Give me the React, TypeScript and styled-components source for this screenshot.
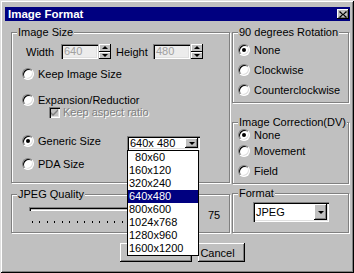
import React from "react";
import styled, { createGlobalStyle } from "styled-components";

const GlobalStyle = createGlobalStyle`
    html, body {
        margin: 0;
        padding: 0;
        background: #ffffff;
    }
    body {
        font-family: "Liberation Sans", Arial, sans-serif;
        font-size: 11px;
        color: #000;
    }
`;

const Window = styled.div`
    width: 354px;
    height: 273px;
    box-sizing: border-box;
    padding: 7px 4px 0 5px;
    background: #c0c0c0;
    box-shadow: inset 1px 1px #dfdfdf, inset -1px -1px #000,
        inset 2px 2px #fff, inset -2px -2px #808080;
`;

const TitleBar = styled.div`
    height: 14px;
    display: flex;
    align-items: center;
    justify-content: space-between;
    padding: 0 1px 0 3px;
    background: #000080;
    color: #fff;
    font-weight: bold;
    font-size: 11.5px;
`;

const CloseButton = styled.div`
    width: 12px;
    height: 10px;
    box-sizing: border-box;
    display: flex;
    align-items: center;
    justify-content: center;
    background: #c0c0c0;
    box-shadow: inset -1px -1px #000, inset 1px 1px #fff, inset -2px -2px #808080;
`;

const Columns = styled.div`
    display: grid;
    grid-template-columns: 219px 117px;
    column-gap: 2px;
    margin-left: 6px;
`;

const Column = styled.div`
    display: flex;
    flex-direction: column;
`;

const Group = styled.div<{ $h: number; $mt: number }>`
    position: relative;
    box-sizing: border-box;
    height: ${(p) => p.$h}px;
    margin-top: ${(p) => p.$mt}px;
    border: 1px solid #808080;
    box-shadow: inset 1px 1px #fff, 1px 1px #fff;
`;

const Legend = styled.span`
    position: absolute;
    top: -8px;
    left: 5px;
    padding: 0 1px;
    line-height: 14px;
    background: #c0c0c0;
    white-space: nowrap;
`;

const SizeRow = styled.div`
    display: flex;
    align-items: center;
    height: 15px;
    margin-top: 11px;
    padding-left: 14px;
`;

const FieldLabel = styled.span<{ $w: number }>`
    width: ${(p) => p.$w}px;
    flex: none;
`;

const Edit = styled.div`
    width: 37px;
    height: 15px;
    box-sizing: border-box;
    padding: 1px 0 0 3px;
    background: #ececec;
    color: #a0a0a0;
    box-shadow: inset 1px 1px #808080, inset 2px 2px #000, inset -1px -1px #fff,
        inset -2px -2px #dfdfdf;
`;

const Spinner = styled.div`
    width: 12px;
    height: 15px;
    display: flex;
    flex-direction: column;
    margin-left: 1px;
    margin-right: 5px;
`;

const SpinHalf = styled.div<{ $down?: boolean }>`
    flex: 1;
    display: flex;
    align-items: center;
    justify-content: center;
    background: #c0c0c0;
    box-shadow: inset -1px -1px #000, inset 1px 1px #fff;
    &::after {
        content: "";
        border-left: 3px solid transparent;
        border-right: 3px solid transparent;
        ${(p) => (p.$down ? "border-top: 3px solid #000;" : "border-bottom: 3px solid #000;")}
    }
`;

const OptionRow = styled.div<{ $mt: number; $pl: number }>`
    display: flex;
    align-items: center;
    height: 12px;
    margin-top: ${(p) => p.$mt}px;
    padding-left: ${(p) => p.$pl}px;
    white-space: nowrap;
`;

const RadioDot = styled.span<{ $on?: boolean }>`
    position: relative;
    flex: none;
    width: 12px;
    height: 12px;
    box-sizing: border-box;
    border-radius: 50%;
    background: #fff;
    border: 1px solid;
    border-color: #808080 #fff #fff #808080;
    box-shadow: inset 1px 1px #000, inset -1px -1px #dfdfdf;
    margin-right: 4px;
    &::after {
        content: "";
        display: ${(p) => (p.$on ? "block" : "none")};
        position: absolute;
        left: 3px;
        top: 3px;
        width: 4px;
        height: 4px;
        border-radius: 50%;
        background: #000;
    }
`;

const OptionText = styled.span<{ $w?: number }>`
    ${(p) => (p.$w ? `width: ${p.$w}px;` : "")}
`;

const CheckBox = styled.span`
    flex: none;
    width: 11px;
    height: 11px;
    box-sizing: border-box;
    display: flex;
    align-items: center;
    justify-content: center;
    margin-right: 3px;
    background: #c0c0c0;
    box-shadow: inset 1px 1px #808080, inset 2px 2px #000, inset -1px -1px #fff,
        inset -2px -2px #dfdfdf;
`;

const DisabledText = styled.span`
    color: #808080;
    text-shadow: 1px 1px #fff;
`;

const SelectWrap = styled.div`
    position: relative;
    margin-top: 4px;
`;

const Select = styled.div<{ $w: number; $h: number }>`
    width: ${(p) => p.$w}px;
    height: ${(p) => p.$h}px;
    box-sizing: border-box;
    display: flex;
    align-items: center;
    justify-content: space-between;
    padding: 2px 2px 2px 3px;
    background: #fff;
    box-shadow: inset 1px 1px #808080, inset 2px 2px #000, inset -1px -1px #fff,
        inset -2px -2px #dfdfdf;
`;

const DropButton = styled.div`
    width: 13px;
    align-self: stretch;
    display: flex;
    align-items: center;
    justify-content: center;
    background: #c0c0c0;
    box-shadow: inset -1px -1px #000, inset 1px 1px #fff, inset -2px -2px #808080;
    &::after {
        content: "";
        border-left: 3px solid transparent;
        border-right: 3px solid transparent;
        border-top: 3px solid #000;
    }
`;

const DropList = styled.div`
    position: absolute;
    left: 0;
    top: 100%;
    width: 72px;
    box-sizing: border-box;
    border: 1px solid #000;
    background: #fff;
    z-index: 2;
`;

const DropItem = styled.div<{ $sel?: boolean }>`
    height: 13px;
    line-height: 13px;
    padding-left: 1px;
    white-space: pre;
    background: ${(p) => (p.$sel ? "#000080" : "#fff")};
    color: ${(p) => (p.$sel ? "#fff" : "#000")};
`;

const SliderRow = styled.div`
    display: flex;
    align-items: flex-start;
    margin-top: 11px;
    padding-left: 17px;
`;

const SliderArea = styled.div`
    position: relative;
    width: 166px;
    height: 30px;
`;

const Track = styled.div`
    height: 4px;
    margin-top: 1px;
    box-shadow: inset 1px 1px #808080, inset 2px 2px #000, inset -1px -1px #fff;
`;

const Ticks = styled.div`
    display: flex;
    justify-content: space-between;
    margin: 10px 5px 0 3px;
`;

const Tick = styled.span`
    width: 1px;
    height: 2px;
    background: #000;
`;

const Thumb = styled.svg`
    position: absolute;
    left: 151px;
    top: -5px;
`;

const Value = styled.span`
    margin: 3px 0 0 13px;
`;

const FormatRow = styled.div`
    margin: 8px 0 0 20px;
`;

const ButtonRow = styled.div`
    display: flex;
    gap: 6px;
    margin-top: 10px;
    padding-left: 115px;
`;

const Button = styled.div<{ $w: number; $pb?: number }>`
    width: ${(p) => p.$w}px;
    height: 19px;
    box-sizing: border-box;
    display: flex;
    align-items: center;
    justify-content: center;
    padding: 0 8px ${(p) => p.$pb ?? 0}px 0;
    background: #c0c0c0;
    box-shadow: inset -1px -1px #000, inset 1px 1px #fff, inset -2px -2px #808080;
`;

const sizes = [
    "\u200780x60",
    "160x120",
    "320x240",
    "640x480",
    "800x600",
    "1024x768",
    "1280x960",
    "1600x1200",
];

const App: React.FC = () => {
    return (
        <Window>
            <GlobalStyle />
            <TitleBar>
                <span>Image Format</span>
                <CloseButton>
                    <svg width="8" height="7" viewBox="0 0 8 7">
                        <path d="M1 0 L4 3 L7 0 L8 1 L5 3.5 L8 6 L7 7 L4 4 L1 7 L0 6 L3 3.5 L0 1 Z" fill="#000" />
                    </svg>
                </CloseButton>
            </TitleBar>
            <Columns>
                <Column>
                    <Group $h={151} $mt={11}>
                        <Legend>Image Size</Legend>
                        <SizeRow>
                            <FieldLabel $w={35}>Width</FieldLabel>
                            <Edit>640</Edit>
                            <Spinner>
                                <SpinHalf />
                                <SpinHalf $down />
                            </Spinner>
                            <FieldLabel $w={37}>Height</FieldLabel>
                            <Edit>480</Edit>
                            <Spinner>
                                <SpinHalf />
                                <SpinHalf $down />
                            </Spinner>
                        </SizeRow>
                        <OptionRow $mt={9} $pl={10}>
                            <RadioDot />
                            <OptionText>Keep Image Size</OptionText>
                        </OptionRow>
                        <OptionRow $mt={14} $pl={10}>
                            <RadioDot />
                            <OptionText>Expansion/Reductior</OptionText>
                        </OptionRow>
                        <OptionRow $mt={0} $pl={37}>
                            <CheckBox>
                                <svg width="7" height="7" viewBox="0 0 7 7">
                                    <path d="M0 3 L2 5 L7 0 L7 2 L2 7 L0 5 Z" fill="#808080" />
                                </svg>
                            </CheckBox>
                            <DisabledText>Keep aspect ratio</DisabledText>
                        </OptionRow>
                        <OptionRow $mt={17} $pl={10}>
                            <RadioDot $on />
                            <OptionText $w={89}>Generic Size</OptionText>
                            <SelectWrap>
                                <Select $w={73} $h={14}>
                                    <span>640x 480</span>
                                    <DropButton />
                                </Select>
                                <DropList>
                                    {sizes.map((s) => (
                                        <DropItem key={s} $sel={s === "640x480"}>
                                            {s}
                                        </DropItem>
                                    ))}
                                </DropList>
                            </SelectWrap>
                        </OptionRow>
                        <OptionRow $mt={11} $pl={10}>
                            <RadioDot />
                            <OptionText>PDA Size</OptionText>
                        </OptionRow>
                    </Group>
                    <Group $h={39} $mt={11}>
                        <Legend>JPEG Quality</Legend>
                        <SliderRow>
                            <SliderArea>
                                <Track />
                                <Ticks>
                                    {Array.from({ length: 22 }).map((_, i) => (
                                        <Tick key={i} />
                                    ))}
                                </Ticks>
                                <Thumb width="11" height="20" viewBox="0 0 11 20">
                                    <path d="M0 0 H10 V15 L5 20 L0 15 Z" fill="#c0c0c0" />
                                    <path d="M0 15 V0 H10" stroke="#fff" fill="none" />
                                    <path d="M10.5 0 V15 L5.5 20" stroke="#000" fill="none" />
                                    <path d="M9.5 1 V14.5 L5 19" stroke="#808080" fill="none" />
                                </Thumb>
                            </SliderArea>
                            <Value>75</Value>
                        </SliderRow>
                    </Group>
                </Column>
                <Column>
                    <Group $h={71} $mt={11}>
                        <Legend>90 degrees Rotation</Legend>
                        <OptionRow $mt={11} $pl={5}>
                            <RadioDot $on />
                            <OptionText>None</OptionText>
                        </OptionRow>
                        <OptionRow $mt={8} $pl={5}>
                            <RadioDot />
                            <OptionText>Clockwise</OptionText>
                        </OptionRow>
                        <OptionRow $mt={8} $pl={5}>
                            <RadioDot />
                            <OptionText>Counterclockwise</OptionText>
                        </OptionRow>
                    </Group>
                    <Group $h={62} $mt={19}>
                        <Legend>Image Correction(DV)</Legend>
                        <OptionRow $mt={6} $pl={5}>
                            <RadioDot $on />
                            <OptionText>None</OptionText>
                        </OptionRow>
                        <OptionRow $mt={4} $pl={5}>
                            <RadioDot />
                            <OptionText>Movement</OptionText>
                        </OptionRow>
                        <OptionRow $mt={8} $pl={5}>
                            <RadioDot />
                            <OptionText>Field</OptionText>
                        </OptionRow>
                    </Group>
                    <Group $h={40} $mt={9}>
                        <Legend>Format</Legend>
                        <FormatRow>
                            <Select $w={76} $h={20}>
                                <span>JPEG</span>
                                <DropButton />
                            </Select>
                        </FormatRow>
                    </Group>
                </Column>
            </Columns>
            <ButtonRow>
                <Button $w={72} $pb={6}>OK</Button>
                <Button $w={47}>Cancel</Button>
            </ButtonRow>
        </Window>
    );
};

export default App;
